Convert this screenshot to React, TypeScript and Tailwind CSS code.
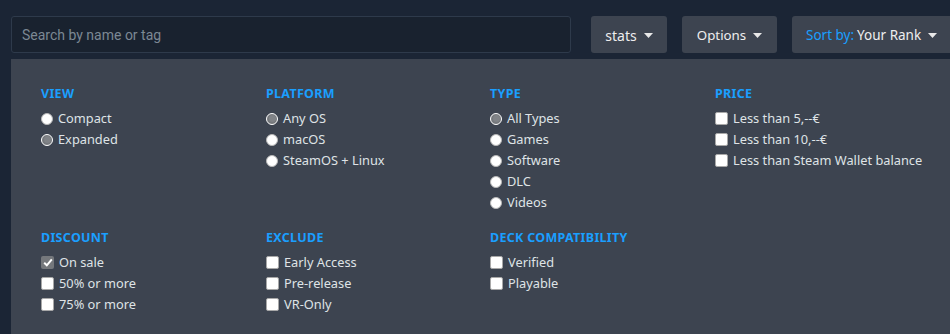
import React from "react";

const font = { fontFamily: '"Noto Sans", "Open Sans", Arial, sans-serif' };

function Caret() {
  return (
    <svg width="9" height="5" viewBox="0 0 9 5" className="ml-[7px] inline-block">
      <path d="M0 0 L9 0 L4.5 5 Z" fill="#e8e8e8" />
    </svg>
  );
}

function Radio({ label, checked }: { label: string; checked?: boolean }) {
  return (
    <div className="flex h-[21px] items-center">
      {checked ? (
        <span className="flex h-[12px] w-[12px] items-center justify-center rounded-full border-[1.5px] border-white bg-[#75787c]">
          <span className="h-[7px] w-[7px] rounded-full bg-[#808387]" />
        </span>
      ) : (
        <span className="h-[12px] w-[12px] rounded-full border border-[#b8b8b8] bg-white" />
      )}
      <span className="ml-[5px] text-[12.8px] text-[#dfe3e6]">{label}</span>
    </div>
  );
}

function Check({ label, checked }: { label: string; checked?: boolean }) {
  return (
    <div className="flex h-[21px] items-center">
      {checked ? (
        <span className="flex h-[13px] w-[13px] items-center justify-center rounded-[2px] bg-[#75787c]">
          <svg width="10" height="9" viewBox="0 0 10 9">
            <path d="M1.2 4.8 L3.8 7.3 L8.8 1.3" stroke="#ffffff" strokeWidth="2" fill="none" />
          </svg>
        </span>
      ) : (
        <span className="h-[13px] w-[13px] rounded-[2px] border border-[#a8a8a8] bg-white" />
      )}
      <span className="ml-[5px] text-[12.8px] text-[#dfe3e6]">{label}</span>
    </div>
  );
}

function Section({ title, children }: { title: string; children: React.ReactNode }) {
  return (
    <div>
      <div className="mb-[6px] h-[16px] text-[12.5px] font-bold leading-[16px] tracking-[0.3px] text-[#1a9fff]">
        {title}
      </div>
      {children}
    </div>
  );
}

export default function App() {
  return (
    <div className="h-[334px] w-[950px] overflow-hidden bg-[#1b2535]" style={font}>
      <div className="flex pl-[11px] pt-[16px]">
        <div className="flex h-[37px] w-[560px] items-center rounded-[3px] border border-[#2e3a4b] bg-[#19222f] pl-[10px] pt-[2px]">
          <span className="text-[14px] text-[#7c8894]" style={{ fontFamily: "Roboto, Arial, sans-serif" }}>
            Search by name or tag
          </span>
        </div>
        <button className="ml-[20px] flex h-[37px] w-[76px] items-center justify-center rounded-[3px] bg-[#3d4450] pt-[2px] text-[14px] text-[#eeeeee]">
          stats
          <Caret />
        </button>
        <button className="ml-[15px] flex h-[37px] w-[95px] items-center justify-center rounded-[3px] bg-[#3d4450] pt-[2px] text-[13.3px] text-[#eeeeee]">
          Options
          <Caret />
        </button>
        <button className="ml-[15px] flex h-[37px] flex-1 items-center rounded-l-[3px] bg-[#3d4450] pl-[14px] pt-[2px] text-[13.5px] text-[#eeeeee]">
          <span className="text-[#1a9fff]">Sort by:</span>
          <span className="ml-[3px]">Your Rank</span>
          <Caret />
        </button>
      </div>
      <div className="ml-[11px] mt-[6px] h-[400px] bg-[#3d4450] pl-[30px] pt-[27px]">
        <div className="grid grid-cols-[225px_224px_225px_225px] gap-y-[17px]">
          <Section title="VIEW">
            <Radio label="Compact" />
            <Radio label="Expanded" checked />
          </Section>
          <Section title="PLATFORM">
            <Radio label="Any OS" checked />
            <Radio label="macOS" />
            <Radio label="SteamOS + Linux" />
          </Section>
          <Section title="TYPE">
            <Radio label="All Types" checked />
            <Radio label="Games" />
            <Radio label="Software" />
            <Radio label="DLC" />
            <Radio label="Videos" />
          </Section>
          <Section title="PRICE">
            <Check label="Less than 5,--€" />
            <Check label="Less than 10,--€" />
            <Check label="Less than Steam Wallet balance" />
          </Section>
          <Section title="DISCOUNT">
            <Check label="On sale" checked />
            <Check label="50% or more" />
            <Check label="75% or more" />
          </Section>
          <Section title="EXCLUDE">
            <Check label="Early Access" />
            <Check label="Pre-release" />
            <Check label="VR-Only" />
          </Section>
          <Section title="DECK COMPATIBILITY">
            <Check label="Verified" />
            <Check label="Playable" />
          </Section>
        </div>
      </div>
    </div>
  );
}
